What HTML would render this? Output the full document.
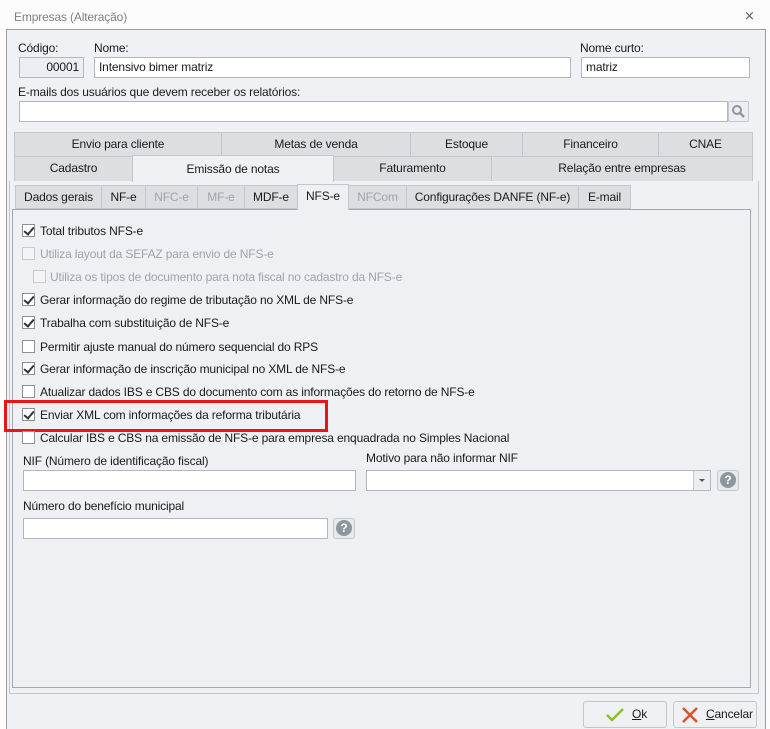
<!DOCTYPE html>
<html><head><meta charset="utf-8"><style>
*{box-sizing:border-box;margin:0;padding:0}
body{width:770px;height:727px;background:#fcfcfc;font-family:"Liberation Sans",sans-serif;font-size:12px;letter-spacing:-0.15px;color:#1a1a1a;position:relative;overflow:hidden}
.a{position:absolute}
.inp{position:absolute;background:#fff;border:1px solid #b4b8be;height:21px;padding:2px 4px;line-height:15px}
.tab{position:absolute;background:#dcdee2;border:1px solid #c3c6cb;text-align:center;line-height:22px}
.st{position:absolute;background:#dcdee2;border:1px solid #c3c6cb;text-align:center;line-height:22px;top:185px;height:24px}
.dis{color:#a0a3a8}
.cb{position:absolute;width:13px;height:13px;border:1px solid #8d9095;background:#fff}
.cb.d{border-color:#c8cacd;background:#f4f4f5}
.cb.c::after{content:"";position:absolute;left:3px;top:0px;width:4px;height:8px;border:solid #333;border-width:0 2px 2px 0;transform:rotate(40deg)}
.lbl{position:absolute;line-height:14px}
.help{position:absolute;width:22px;height:21px;border:1px solid #c3c6cb;border-radius:3px;background:#e8e9ec}
.help::after{content:"?";position:absolute;left:2px;top:1px;width:16px;height:16px;border-radius:50%;background:#8d979d;color:#fff;font-weight:bold;font-size:12px;text-align:center;line-height:16px}
.btn{position:absolute;top:701px;height:27px;border:1px solid #c3c6cb;border-radius:3px;background:#eff0f3;line-height:25px}
</style></head><body>
<div class="a" style="left:14px;top:10px;color:#808080">Empresas (Alteração)</div>
<div class="a" style="left:744px;top:8px;color:#555;font-size:13px">⨯</div>
<div class="a" style="left:6px;top:29px;width:760px;height:700px;border:1px solid #9a9da2;border-bottom:none;background:#f0f1f5"></div>

<div class="lbl" style="left:18px;top:41px">Código:</div>
<div class="inp" style="left:19px;top:57px;width:65px;background:#eceef1;text-align:right">00001</div>
<div class="lbl" style="left:94px;top:41px">Nome:</div>
<div class="inp" style="left:94px;top:57px;width:477px">Intensivo bimer matriz</div>
<div class="lbl" style="left:580px;top:41px">Nome curto:</div>
<div class="inp" style="left:581px;top:57px;width:169px">matriz</div>
<div class="lbl" style="left:18px;top:85px">E-mails dos usuários que devem receber os relatórios:</div>
<div class="inp" style="left:19px;top:101px;width:709px"></div>
<div class="a" style="left:728px;top:101px;width:21px;height:21px;border:1px solid #c3c6cb;border-radius:2px;background:#eceef1">
<svg width="19" height="19" viewBox="0 0 19 19"><circle cx="8" cy="8" r="4" fill="none" stroke="#8d979d" stroke-width="2"/><path d="M11 11l4 4" stroke="#8d979d" stroke-width="2.5"/></svg></div>

<div class="tab" style="left:14px;top:132px;width:208px;height:25px">Envio para cliente</div>
<div class="tab" style="left:221px;top:132px;width:190px;height:25px">Metas de venda</div>
<div class="tab" style="left:410px;top:132px;width:113px;height:25px">Estoque</div>
<div class="tab" style="left:522px;top:132px;width:137px;height:25px">Financeiro</div>
<div class="tab" style="left:658px;top:132px;width:95px;height:25px">CNAE</div>
<div class="tab" style="left:14px;top:156px;width:119px;height:26px">Cadastro</div>
<div class="tab" style="left:333px;top:156px;width:159px;height:26px">Faturamento</div>
<div class="tab" style="left:491px;top:156px;width:262px;height:26px">Relação entre empresas</div>

<div class="a" style="left:9px;top:181px;width:750px;height:513px;border:1px solid #c3c6cb;border-top:none;background:#f0f1f5"></div>
<div class="tab" style="left:132px;top:155px;width:202px;height:27px;background:#f0f1f5;border-bottom:none;line-height:26px">Emissão de notas</div>

<div class="st" style="left:15px;width:87px">Dados gerais</div>
<div class="st" style="left:101px;width:45px">NF-e</div>
<div class="st dis" style="left:145px;width:53px">NFC-e</div>
<div class="st dis" style="left:197px;width:48px">MF-e</div>
<div class="st" style="left:244px;width:54px">MDF-e</div>
<div class="st dis" style="left:348px;width:59px">NFCom</div>
<div class="st" style="left:406px;width:173px">Configurações DANFE (NF-e)</div>
<div class="st" style="left:578px;width:53px">E-mail</div>
<div class="a" style="left:12px;top:209px;width:739px;height:479px;border:1px solid #a4a7ac;background:#eff0f4"></div>
<div class="st" style="left:297px;width:52px;top:184px;height:26px;background:#eff0f4;border-bottom:none;border-color:#c3c6cb">NFS-e</div>

<div class="cb c" style="left:22px;top:224px"></div><div class="lbl" style="left:40px;top:224px">Total tributos NFS-e</div>
<div class="cb d" style="left:22px;top:247px"></div><div class="lbl dis" style="left:40px;top:247px">Utiliza layout da SEFAZ para envio de NFS-e</div>
<div class="cb d" style="left:33px;top:270px"></div><div class="lbl dis" style="left:50px;top:270px">Utiliza os tipos de documento para nota fiscal no cadastro da NFS-e</div>
<div class="cb c" style="left:22px;top:293px"></div><div class="lbl" style="left:40px;top:293px">Gerar informação do regime de tributação no XML de NFS-e</div>
<div class="cb c" style="left:22px;top:316px"></div><div class="lbl" style="left:40px;top:316px">Trabalha com substituição de NFS-e</div>
<div class="cb" style="left:22px;top:340px"></div><div class="lbl" style="left:40px;top:340px">Permitir ajuste manual do número sequencial do RPS</div>
<div class="cb c" style="left:22px;top:362px"></div><div class="lbl" style="left:40px;top:362px">Gerar informação de inscrição municipal no XML de NFS-e</div>
<div class="cb" style="left:22px;top:385px"></div><div class="lbl" style="left:40px;top:385px">Atualizar dados IBS e CBS do documento com as informações do retorno de NFS-e</div>
<div class="cb c" style="left:22px;top:408px"></div><div class="lbl" style="left:40px;top:408px">Enviar XML com informações da reforma tributária</div>
<div class="a" style="left:4px;top:400px;width:324px;height:32px;border:3px solid #e8141a"></div>
<div class="cb" style="left:22px;top:431px"></div><div class="lbl" style="left:40px;top:431px">Calcular IBS e CBS na emissão de NFS-e para empresa enquadrada no Simples Nacional</div>

<div class="lbl" style="left:23px;top:454px">NIF (Número de identificação fiscal)</div>
<div class="inp" style="left:23px;top:470px;width:333px"></div>
<div class="lbl" style="left:366px;top:451px">Motivo para não informar NIF</div>
<div class="inp" style="left:366px;top:470px;width:345px"></div>
<div class="a" style="left:693px;top:471px;width:17px;height:19px;border-left:1px solid #c3c6cb;background:#eceef1"><div class="a" style="left:5px;top:8px;border:3px solid transparent;border-top:3px solid #555"></div></div>
<div class="help" style="left:717px;top:470px"></div>
<div class="lbl" style="left:23px;top:499px">Número do benefício municipal</div>
<div class="inp" style="left:23px;top:518px;width:305px"></div>
<div class="help" style="left:333px;top:518px"></div>

<div class="btn" style="left:583px;width:84px">
<svg class="a" style="left:22px;top:6px" width="18" height="14" viewBox="0 0 18 14"><path d="M1 7l5 5L17 1" fill="none" stroke="#8cc21f" stroke-width="2.5"/></svg>
<span class="a" style="left:48px"><u>O</u>k</span></div>
<div class="btn" style="left:673px;width:84px">
<svg class="a" style="left:8px;top:5px" width="16" height="16" viewBox="0 0 16 16"><path d="M1 1l14 14M15 1L1 15" stroke="#d9532b" stroke-width="2.5"/></svg>
<span class="a" style="left:32px"><u>C</u>ancelar</span></div>
</body></html>
